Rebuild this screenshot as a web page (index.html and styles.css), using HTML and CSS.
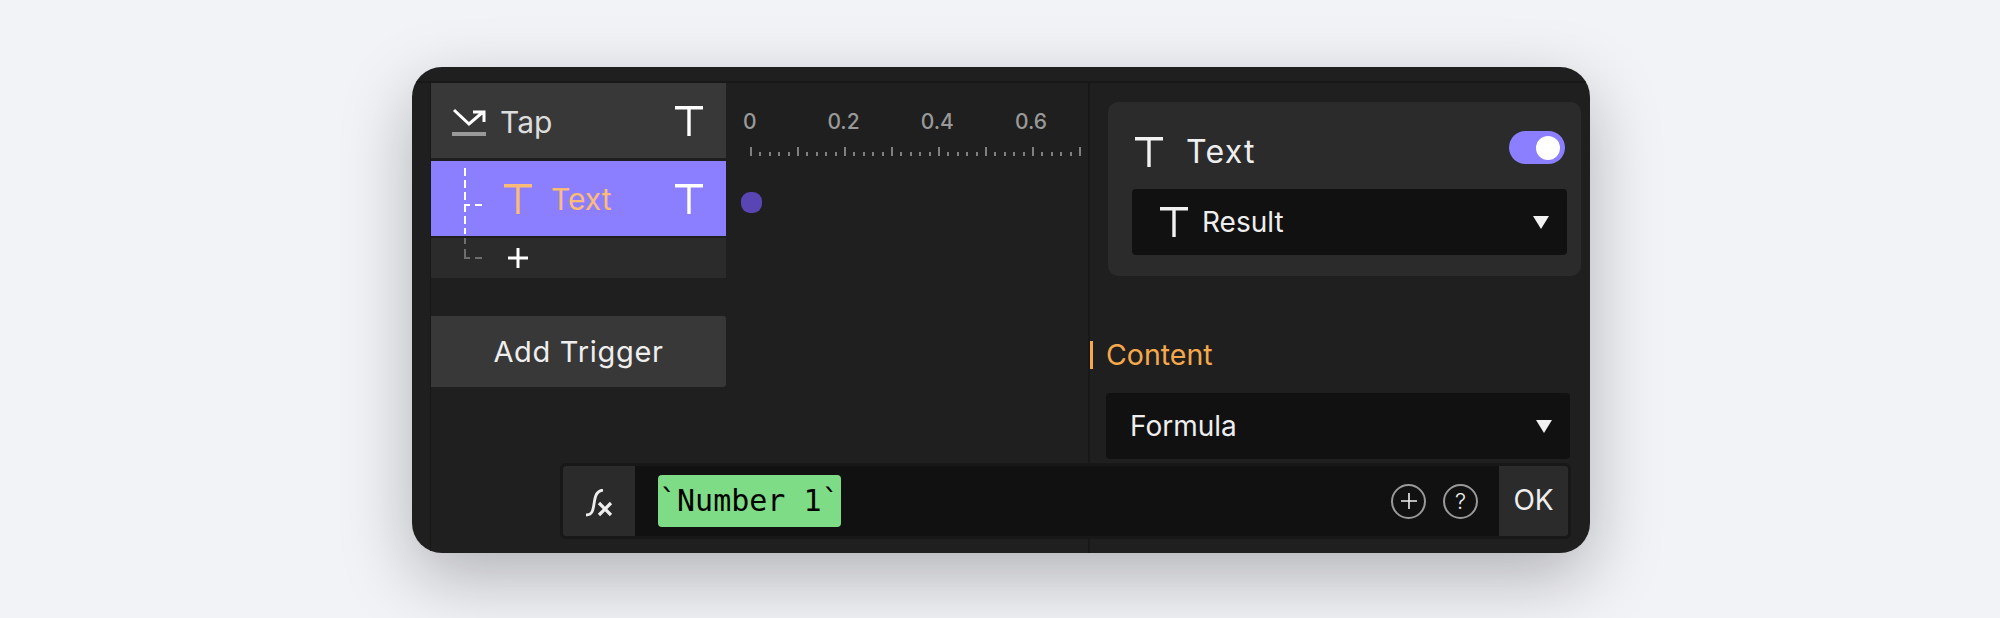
FILE: index.html
```html
<!DOCTYPE html>
<html lang="en">
  <head>
    <meta charset="UTF-8" />
    <title>Trigger editor</title>
    <link rel="stylesheet" href="styles.css">
  </head>
  <body>
    <svg class="defs" width="0" height="0">
      <symbol id="t-icon" viewBox="0 0 28 30">
        <path d="M0 1.7H28M14 1.7V30" fill="none" stroke="currentColor" stroke-width="3.4" />
      </symbol>
    </svg>

    <div class="window">
      <div class="strip"></div>

      <!-- triggers list -->
      <div class="triggers">
        <div class="row row-tap">
          <svg class="tap-icon" width="34" height="32" viewBox="0 0 34 32">
            <path d="M2 5L17 19L31 7M21 7H32V17" fill="none" stroke="#fff" stroke-width="3" />
            <path d="M0 29H34" stroke="#999" stroke-width="4" />
          </svg>
          <span class="row-name">Tap</span>
          <svg class="t-icon t-end"><use href="#t-icon" /></svg>
        </div>
        <div class="row row-text">
          <div class="branch"></div>
          <svg class="t-icon t-orange"><use href="#t-icon" /></svg>
          <span class="row-name name-orange">Text</span>
          <svg class="t-icon t-end"><use href="#t-icon" /></svg>
        </div>
        <div class="row-add">
          <div class="branch-end"></div>
          <svg class="plus" width="20" height="20" viewBox="0 0 20 20">
            <path d="M0 10H20M10 0V20" stroke="#fff" stroke-width="3" />
          </svg>
        </div>
        <button class="add-trigger">Add Trigger</button>
      </div>

      <!-- timeline -->
      <div class="timeline">
        <div class="labels">
          <span>0</span>
          <span>0.2</span>
          <span>0.4</span>
          <span>0.6</span>
        </div>
        <div class="ticks"></div>
        <div class="dot"></div>
      </div>

      <!-- properties -->
      <div class="props">
        <div class="card">
          <div class="card-head">
            <svg class="t-icon"><use href="#t-icon" /></svg>
            <span class="card-title">Text</span>
            <div class="toggle"><div class="knob"></div></div>
          </div>
          <div class="select select-result">
            <svg class="t-icon"><use href="#t-icon" /></svg>
            <span class="select-label">Result</span>
            <div class="arrow"></div>
          </div>
        </div>
        <div class="section-title">Content</div>
        <div class="select select-formula">
          <span class="select-label">Formula</span>
          <div class="arrow"></div>
        </div>
      </div>

      <!-- formula bar sits over the panels -->
      <div class="formula-bar">
        <div class="fx">
          <svg width="28" height="28" viewBox="0 0 28 28">
            <path d="M1 26C7 26 8 22 9 15C10 8 11 2 18 1" fill="none" stroke="#eee" stroke-width="2.8" />
            <path d="M14 14L26 26M26 14L14 26" fill="none" stroke="#eee" stroke-width="3.2" />
          </svg>
        </div>
        <div class="formula-input">
          <span class="chip">`Number 1`</span>
          <div class="round-btn">
            <svg width="18" height="18" viewBox="0 0 18 18">
              <path d="M1 9H17M9 1V17" stroke="#eee" stroke-width="1.6" />
            </svg>
          </div>
          <div class="round-btn">?</div>
        </div>
        <div class="ok">OK</div>
      </div>
    </div>
  </body>
</html>
```

FILE: styles.css
```css
body {
  margin: 0;
  height: 618px;
  overflow: hidden;
  background-color: #f2f3f7;
  font-family: Inter, "Liberation Sans", sans-serif;
  color: #eeeeee;
}
.defs {
  display: block;
}
.window {
  position: relative;
  display: flex;
  box-sizing: border-box;
  width: 1178px;
  height: 486px;
  margin: 67px 0 0 412px;
  padding-top: 16px;
  border-radius: 30px;
  overflow: hidden;
  background-color: #1f1f1f;
  box-shadow: 0 24px 70px rgba(0, 0, 0, 0.27);
}
.window::before {
  content: "";
  position: absolute;
  left: 0;
  right: 0;
  top: 14px;
  height: 2px;
  background-color: #181818;
}
.strip {
  width: 18px;
  border-right: 1px solid #181818;
  flex-shrink: 0;
}

/* triggers list */
.triggers {
  width: 295px;
  flex-shrink: 0;
}
.row {
  display: flex;
  align-items: center;
  height: 75px;
  box-sizing: border-box;
}
.row-tap {
  background-color: #383838;
  padding-left: 21px;
  margin-bottom: 3px;
}
.row-text {
  position: relative;
  background-color: #8c7fff;
  padding-left: 73px;
  margin-bottom: 2px;
}
.row-name {
  font-size: 30px;
}
.row-tap .row-name {
  margin-left: 14px;
  padding-top: 2px;
  color: #dddddd;
}
.name-orange {
  margin-left: 19px;
  color: #fdbb76;
}
.t-icon {
  width: 28px;
  height: 30px;
  flex-shrink: 0;
  color: #f2f2f2;
}
.t-end {
  margin-left: auto;
  margin-right: 23px;
  color: #ffffff;
}
.t-orange {
  color: #fdbb76;
}
.branch {
  position: absolute;
  left: 33px;
  top: 7px;
  width: 2px;
  height: 66px;
  background: repeating-linear-gradient(to bottom, #fff 0 8px, transparent 8px 12px);
}
.branch::after {
  content: "";
  position: absolute;
  left: 0;
  top: 36px;
  width: 18px;
  height: 2px;
  background: linear-gradient(to right, #fff 0 6px, transparent 6px 11px, #fff 11px);
}
.row-add {
  position: relative;
  display: flex;
  align-items: center;
  height: 40px;
  padding-left: 77px;
  background-color: #2b2b2b;
}
.branch-end {
  position: absolute;
  left: 33px;
  top: 0;
  width: 2px;
  height: 21px;
  background: linear-gradient(to bottom, #6e6e6e 0 6px, transparent 6px 11px, #6e6e6e 11px);
}
.branch-end::after {
  content: "";
  position: absolute;
  left: 0;
  bottom: 0;
  width: 18px;
  height: 2px;
  background: linear-gradient(to right, #6e6e6e 0 6px, transparent 6px 11px, #6e6e6e 11px);
}
.add-trigger {
  display: block;
  width: 100%;
  height: 71px;
  margin-top: 38px;
  border: 0;
  border-radius: 0 3px 3px 0;
  background-color: #383838;
  color: #eeeeee;
  font-family: inherit;
  font-size: 29px;
  letter-spacing: 0.7px;
}

/* timeline */
.timeline {
  width: 364px;
  flex-shrink: 0;
  box-sizing: border-box;
  padding-left: 24px;
  border-right: 2px solid #181818;
}
.labels {
  display: flex;
  margin-left: -47px;
  margin-top: 27px;
}
.labels span {
  width: 93.7px;
  text-align: center;
  font-size: 21px;
  font-weight: 500;
  line-height: 24px;
  color: #999999;
}
.ticks {
  width: 332px;
  height: 9px;
  margin-top: 13px;
  background-image:
    repeating-linear-gradient(to right, #808080 0 2px, transparent 2px 47px),
    repeating-linear-gradient(to right, #808080 0 2px, transparent 2px 9.4px);
  background-size: 100% 9px, 100% 4px;
  background-position: left bottom;
  background-repeat: no-repeat;
}
.dot {
  width: 21px;
  height: 21px;
  margin: 36px 0 0 -9px;
  border-radius: 9px;
  background-color: #5a45b5;
}

/* properties */
.props {
  flex: 1;
  padding: 19px 9px 0 18px;
}
.card {
  height: 174px;
  box-sizing: border-box;
  padding: 0 14px 0 24px;
  border-radius: 10px;
  background-color: #2b2b2b;
}
.card-head {
  display: flex;
  align-items: center;
  box-sizing: border-box;
  height: 87px;
  padding: 12px 0 0 3px;
}
.card-title {
  margin-left: 23px;
  font-size: 32px;
  letter-spacing: 1.3px;
}
.toggle {
  display: flex;
  justify-content: flex-end;
  align-items: center;
  box-sizing: border-box;
  width: 56px;
  height: 33px;
  margin: -8px 2px 0 auto;
  padding-right: 5px;
  border-radius: 17px;
  background-color: #8c7fff;
}
.knob {
  width: 24px;
  height: 24px;
  border-radius: 50%;
  background-color: #ffffff;
}
.select {
  display: flex;
  align-items: center;
  height: 66px;
  box-sizing: border-box;
  border-radius: 4px;
  background-color: #111111;
}
.select-result {
  padding: 0 18px 0 28px;
}
.select-result .select-label {
  margin-left: 14px;
}
.select-label {
  font-size: 28px;
}
.select-formula {
  margin: 14px 11px 0 -2px;
  padding: 0 18px 0 24px;
}
.arrow {
  margin-left: auto;
  border-left: 8px solid transparent;
  border-right: 8px solid transparent;
  border-top: 13px solid #f2f2f2;
}
.section-title {
  position: relative;
  margin: 65px 0 0 -2px;
  height: 38px;
  line-height: 28px;
  font-size: 28.5px;
  color: #f5a94c;
}
.section-title::before {
  content: "";
  position: absolute;
  left: -16px;
  top: 0;
  width: 3px;
  height: 28px;
  background-color: #f5a94c;
}

/* formula bar */
.formula-bar {
  position: absolute;
  left: 148px;
  top: 396px;
  display: flex;
  width: 1011px;
  height: 76px;
  box-sizing: border-box;
  border: 3px solid #181818;
  border-radius: 6px;
  background-color: #2b2b2b;
}
.fx {
  display: flex;
  align-items: center;
  justify-content: center;
  width: 72px;
}
.fx svg {
  margin-top: 3px;
}
.formula-input {
  flex: 1;
  display: flex;
  align-items: center;
  gap: 17px;
  padding: 0 21px 0 23px;
  background-color: #111111;
}
.chip {
  margin-right: auto;
  padding: 0 1px;
  height: 52px;
  line-height: 52px;
  border-radius: 4px;
  background-color: #7fdc86;
  color: #000000;
  font-family: "DejaVu Sans Mono", monospace;
  font-size: 30px;
}
.round-btn {
  display: flex;
  align-items: center;
  justify-content: center;
  box-sizing: border-box;
  width: 35px;
  height: 35px;
  border: 2px solid #999999;
  border-radius: 50%;
  font-size: 22px;
  font-weight: 300;
}
.ok {
  width: 69px;
  line-height: 68px;
  text-align: center;
  font-size: 28px;
}
```
